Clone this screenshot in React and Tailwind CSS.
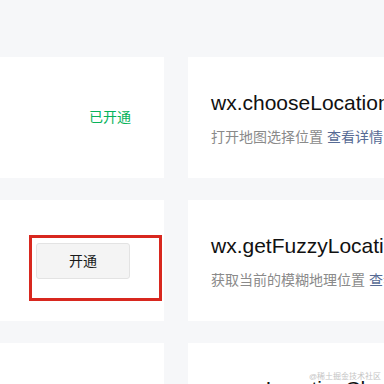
import React from 'react';

const font = { fontFamily: '"Liberation Sans", "Noto Sans CJK SC", sans-serif' };

const rows = [
  { api: 'wx.chooseLocation', desc: '打开地图选择位置', status: 'on' },
  { api: 'wx.getFuzzyLocation', desc: '获取当前的模糊地理位置', status: 'off' },
  { api: 'wx.onLocationChange', desc: '监听实时地理位置变化事件', status: 'none' },
];

const LeftCard = ({ status }) => {
  if (status === 'on') {
    return (
      <div className="w-[164px] h-[121px] shrink-0 bg-white flex items-center justify-end pr-[33px]">
        <span className="text-[14px] text-[#07b25a]">已开通</span>
      </div>
    );
  }
  if (status === 'off') {
    return (
      <div className="w-[164px] h-[121px] shrink-0 bg-white flex justify-end items-start pt-[35px] pr-[2px]">
        <div className="w-[133px] h-[66px] border-[3px] border-[#d8281f] pl-[4px] pt-[5px]">
          <button className="w-[94px] h-[36px] bg-[#f4f4f4] border border-[#e3e3e3] rounded-[3px] text-[14px] text-[#1a1a1a]">开通</button>
        </div>
      </div>
    );
  }
  return <div className="w-[164px] h-[121px] shrink-0 bg-white" />;
};

export default function App() {
  return (
    <div className="relative w-[384px] h-[384px] overflow-hidden bg-[#f6f7f9]" style={font}>
      <div className="flex flex-col gap-[22px] pt-[57px]">
        {rows.map((r) => (
          <div key={r.api} className="flex gap-[24px]">
            <LeftCard status={r.status} />
            <div className="w-[260px] h-[121px] shrink-0 bg-white pl-[23px] pt-[32px] whitespace-nowrap">
              <p className="text-[21px] leading-[28px] text-[#111]">{r.api}</p>
              <p className="mt-[10px] text-[14px] leading-[20px] text-[#8a8a8a]">
                {r.desc} <span className="text-[#576b95]">查看详情</span>
              </p>
            </div>
          </div>
        ))}
      </div>
      <div className="absolute left-[309px] top-[372px] text-[8px] leading-[10px] text-[#c4c4c4] whitespace-nowrap">@稀土掘金技术社区</div>
    </div>
  );
}
